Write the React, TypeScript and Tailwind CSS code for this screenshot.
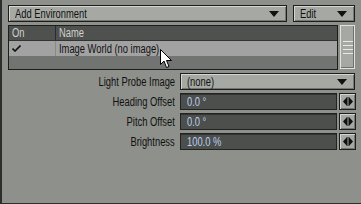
import React from 'react';

const font = "font-['Liberation_Sans',Arial,sans-serif]";

const bevel = 'border border-[#1c1d1c] shadow-[inset_1px_1px_0_#d4d6d1,inset_-1px_-1px_0_#75776f]';

// the UI font is a narrow bitmap face, so squeeze Liberation Sans horizontally
const Txt: React.FC<{ children: React.ReactNode; right?: boolean }> = ({ children, right }) => (
    <span className={`inline-block whitespace-nowrap leading-none scale-x-[0.78] ${right ? 'origin-right' : 'origin-left'}`}>
        {children}
    </span>
);

const DownTriangle: React.FC = () => (
    <svg width="10" height="6" viewBox="0 0 10 6" className="shrink-0">
        <path d="M0 0 H10 L5 6 Z" fill="#111" />
    </svg>
);

const SpinIcon: React.FC = () => (
    <svg width="10" height="9" viewBox="0 0 10 9">
        <path d="M4 0 L0 4.5 L4 9 Z" fill="#111" />
        <rect x="4.5" y="0" width="1" height="9" fill="#111" />
        <path d="M6 0 L10 4.5 L6 9 Z" fill="#111" />
    </svg>
);

const Dropdown: React.FC<{ label: string; className?: string }> = ({ label, className }) => (
    <div className={`${bevel} bg-[#a6a9a3] h-[17px] flex items-center justify-between pl-[6px] pr-[7px] text-[#111] ${className ?? ''}`}>
        <Txt>{label}</Txt>
        <DownTriangle />
    </div>
);

const NumberField: React.FC<{ label: string; value: string }> = ({ label, value }) => (
    <div className="flex items-center h-[17px]">
        <div className="w-[174px] text-right pr-[1px] text-[#111]"><Txt right>{label}</Txt></div>
        <div className="ml-[4px] w-[157px] h-[17px] bg-[#4c4f4c] border border-[#222] shadow-[inset_0_1px_0_#333] flex items-center pl-[6px] text-[#bcd0f2]">
            <Txt>{value}</Txt>
        </div>
        <div className={`${bevel} ml-[2px] w-[17px] h-[17px] bg-[#a6a9a3] flex items-center justify-center`}>
            <SpinIcon />
        </div>
    </div>
);

const Cursor: React.FC = () => (
    <svg width="13" height="20" viewBox="0 0 13 20" className="absolute left-[158px] top-[49px]">
        <path d="M0.5 0.5 V15.5 L4 12 L6.5 18.5 L9 17.5 L6.5 11.5 H11.5 Z" fill="#fff" stroke="#000" strokeWidth="1" />
    </svg>
);

export default function App() {
    return (
        <div className={`${font} text-[12px] relative w-[361px] h-[204px] bg-[#8e908b] border-l-2 border-b border-[#2e2f2d] overflow-hidden`}>
            {/* top bar */}
            <div className="flex pt-[5px] pl-[6px]">
                <Dropdown label="Add Environment" className="w-[279px]" />
                <Dropdown label="Edit" className="ml-[6px] w-[62px]" />
            </div>

            {/* list + scrollbar */}
            <div className="flex mt-[3px] pl-[6px]">
                <div className="w-[330px] h-[45px] border border-[#1c1d1c] bg-[#717470] flex flex-col">
                    <div className="h-[14px] bg-[#4e514e] flex text-[#d0d2cf] items-center">
                        <div className="w-[47px] h-full border-r border-[#2a2b2a] flex items-center pl-[3px]"><Txt>On</Txt></div>
                        <div className="pl-[3px]"><Txt>Name</Txt></div>
                    </div>
                    <div className="h-[16px] bg-[#a3a2a3] flex items-center border-t border-[#333] text-[#111]">
                        <div className="w-[47px] h-full border-r border-[#8a898a] flex items-center pl-[3px]">
                            <svg width="9" height="7" viewBox="0 0 9 7">
                                <path d="M0.5 3.5 L3 6 L8.5 0.5" fill="none" stroke="#111" strokeWidth="1.6" />
                            </svg>
                        </div>
                        <div className="pl-[3px]"><Txt>Image World (no image)</Txt></div>
                    </div>
                </div>
                <div className="ml-[2px] w-[15px] h-[44px] bg-[#a6a9a3] border border-[#e0e2dd] shadow-[inset_-1px_-1px_0_#6e706c] flex flex-col items-center justify-center gap-[3px]">
                    <div className="w-[10px] h-px bg-[#e8eae5]" />
                    <div className="w-[10px] h-px bg-[#e8eae5]" />
                    <div className="w-[10px] h-px bg-[#e8eae5]" />
                    <div className="w-[10px] h-px bg-[#e8eae5]" />
                </div>
            </div>

            {/* properties */}
            <div className="flex flex-col gap-[3px] mt-[3px]">
                <div className="flex items-center h-[17px]">
                    <div className="w-[174px] text-right pr-[1px] text-[#111]"><Txt right>Light Probe Image</Txt></div>
                    <Dropdown label="(none)" className="ml-[4px] w-[175px]" />
                </div>
                <NumberField label="Heading Offset" value="0.0 °" />
                <NumberField label="Pitch Offset" value="0.0 °" />
                <NumberField label="Brightness" value="100.0 %" />
            </div>

            <Cursor />
        </div>
    );
}
